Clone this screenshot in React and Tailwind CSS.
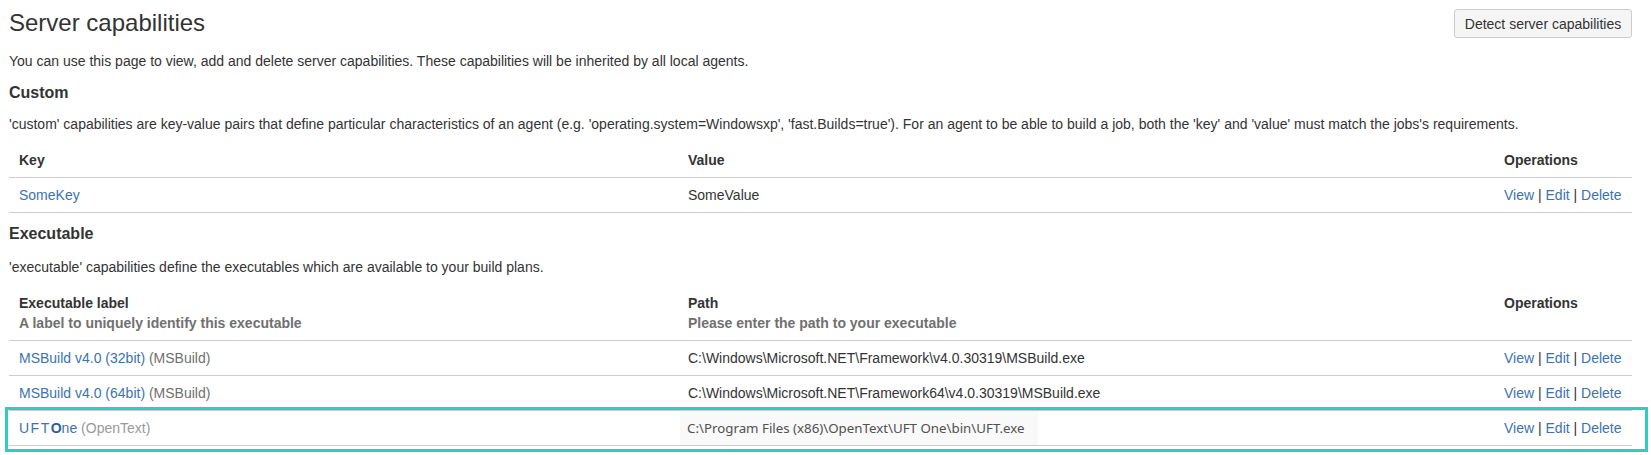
import React from "react";

const LINK = "text-[#3b73af]";

function Ops() {
  return (
    <span className="whitespace-nowrap">
      <a className={LINK}>View</a>
      <span className="text-[#333]"> | </span>
      <a className={LINK}>Edit</a>
      <span className="text-[#333]"> | </span>
      <a className={LINK}>Delete</a>
    </span>
  );
}

const GRID = "grid grid-cols-[669px_1fr_138px]";

export default function App() {
  return (
    <div
      className="w-full bg-white pl-[9px] pr-[19px] text-[14px] leading-[20px] text-[#333]"
      style={{ fontFamily: '"Liberation Sans", Arial, sans-serif' }}
    >
      <div className="flex items-start justify-between">
        <h1 className="mt-[10px] text-[24px] leading-[26px] font-normal text-[#333]">
          Server capabilities
        </h1>
        <button className="mt-[9px] flex h-[29px] w-[178px] items-center justify-center rounded-[3px] border border-[#ccc] bg-[#f5f5f5] text-[14px] text-[#333]">
          Detect server capabilities
        </button>
      </div>

      <p className="mt-[13px]">
        You can use this page to view, add and delete server capabilities. These capabilities will be inherited by all local agents.
      </p>

      <h2 className="mt-[12px] text-[16px] leading-[20px] font-bold">Custom</h2>
      <p className="mt-[11px]">
        'custom' capabilities are key-value pairs that define particular characteristics of an agent (e.g. 'operating.system=Windowsxp', 'fast.Builds=true'). For an agent to be able to build a job, both the 'key' and 'value' must match the jobs's requirements.
      </p>

      <div className="mt-[8px]">
        <div className={`${GRID} border-b border-[#ccc] font-bold`}>
          <div className="px-[10px] pt-[8px] pb-[7px]">Key</div>
          <div className="px-[10px] pt-[8px] pb-[7px]">Value</div>
          <div className="px-[10px] pt-[8px] pb-[7px]">Operations</div>
        </div>
        <div className={`${GRID} border-b border-[#ccc]`}>
          <div className="px-[10px] py-[7px]">
            <a className={LINK}>SomeKey</a>
          </div>
          <div className="px-[10px] py-[7px]">SomeValue</div>
          <div className="px-[10px] py-[7px]">
            <Ops />
          </div>
        </div>
      </div>

      <h2 className="mt-[11px] text-[16px] leading-[20px] font-bold">Executable</h2>
      <p className="mt-[13px]">
        'executable' capabilities define the executables which are available to your build plans.
      </p>

      <div className="mt-[8px] pb-[10px]">
        <div className={`${GRID} border-b border-[#ccc]`}>
          <div className="px-[10px] pt-[8px] pb-[7px]">
            <div className="font-bold">Executable label</div>
            <div className="font-bold text-[#707070]">A label to uniquely identify this executable</div>
          </div>
          <div className="px-[10px] pt-[8px] pb-[7px]">
            <div className="font-bold">Path</div>
            <div className="font-bold text-[#707070]">Please enter the path to your executable</div>
          </div>
          <div className="px-[10px] pt-[8px] pb-[7px]">
            <div className="font-bold">Operations</div>
          </div>
        </div>

        <div className={`${GRID} border-b border-[#ccc]`}>
          <div className="px-[10px] py-[7px]">
            <a className={LINK}>MSBuild v4.0 (32bit)</a>{" "}
            <span className="text-[#707070]">(MSBuild)</span>
          </div>
          <div className="px-[10px] py-[7px]">C:\Windows\Microsoft.NET\Framework\v4.0.30319\MSBuild.exe</div>
          <div className="px-[10px] py-[7px]">
            <Ops />
          </div>
        </div>

        <div className={`${GRID} border-b border-[#ccc]`}>
          <div className="px-[10px] py-[7px]">
            <a className={LINK}>MSBuild v4.0 (64bit)</a>{" "}
            <span className="text-[#707070]">(MSBuild)</span>
          </div>
          <div className="px-[10px] py-[7px]">C:\Windows\Microsoft.NET\Framework64\v4.0.30319\MSBuild.exe</div>
          <div className="px-[10px] py-[7px]">
            <Ops />
          </div>
        </div>

        <div className={`relative ${GRID} border-b border-[#ccc]`}>
          <div className="px-[10px] py-[7px]">
            <a className={LINK}>
              <span className="tracking-[1.5px]">UFT</span>
              <span className="font-bold text-[#2b5e9e]">O</span>
              <span>ne</span>
            </a>{" "}
            <span className="text-[#9a9a9a]">(OpenText)</span>
          </div>
          <div className="p-0">
            <div
              className="ml-[2px] h-full w-[358px] bg-[#f9f9f9] pl-[7px] py-[7px] text-[13.3px] text-[#505050]"
              style={{ fontFamily: '"Noto Sans", "Open Sans", sans-serif' }}
            >
              C:\Program Files (x86)\OpenText\UFT One\bin\UFT.exe
            </div>
          </div>
          <div className="px-[10px] py-[7px]">
            <Ops />
          </div>
          <div className="pointer-events-none absolute top-[-4px] bottom-[-7px] left-[-4px] right-[-16px] border-[3px] border-[#2ccdc2]"></div>
        </div>
      </div>
    </div>
  );
}
